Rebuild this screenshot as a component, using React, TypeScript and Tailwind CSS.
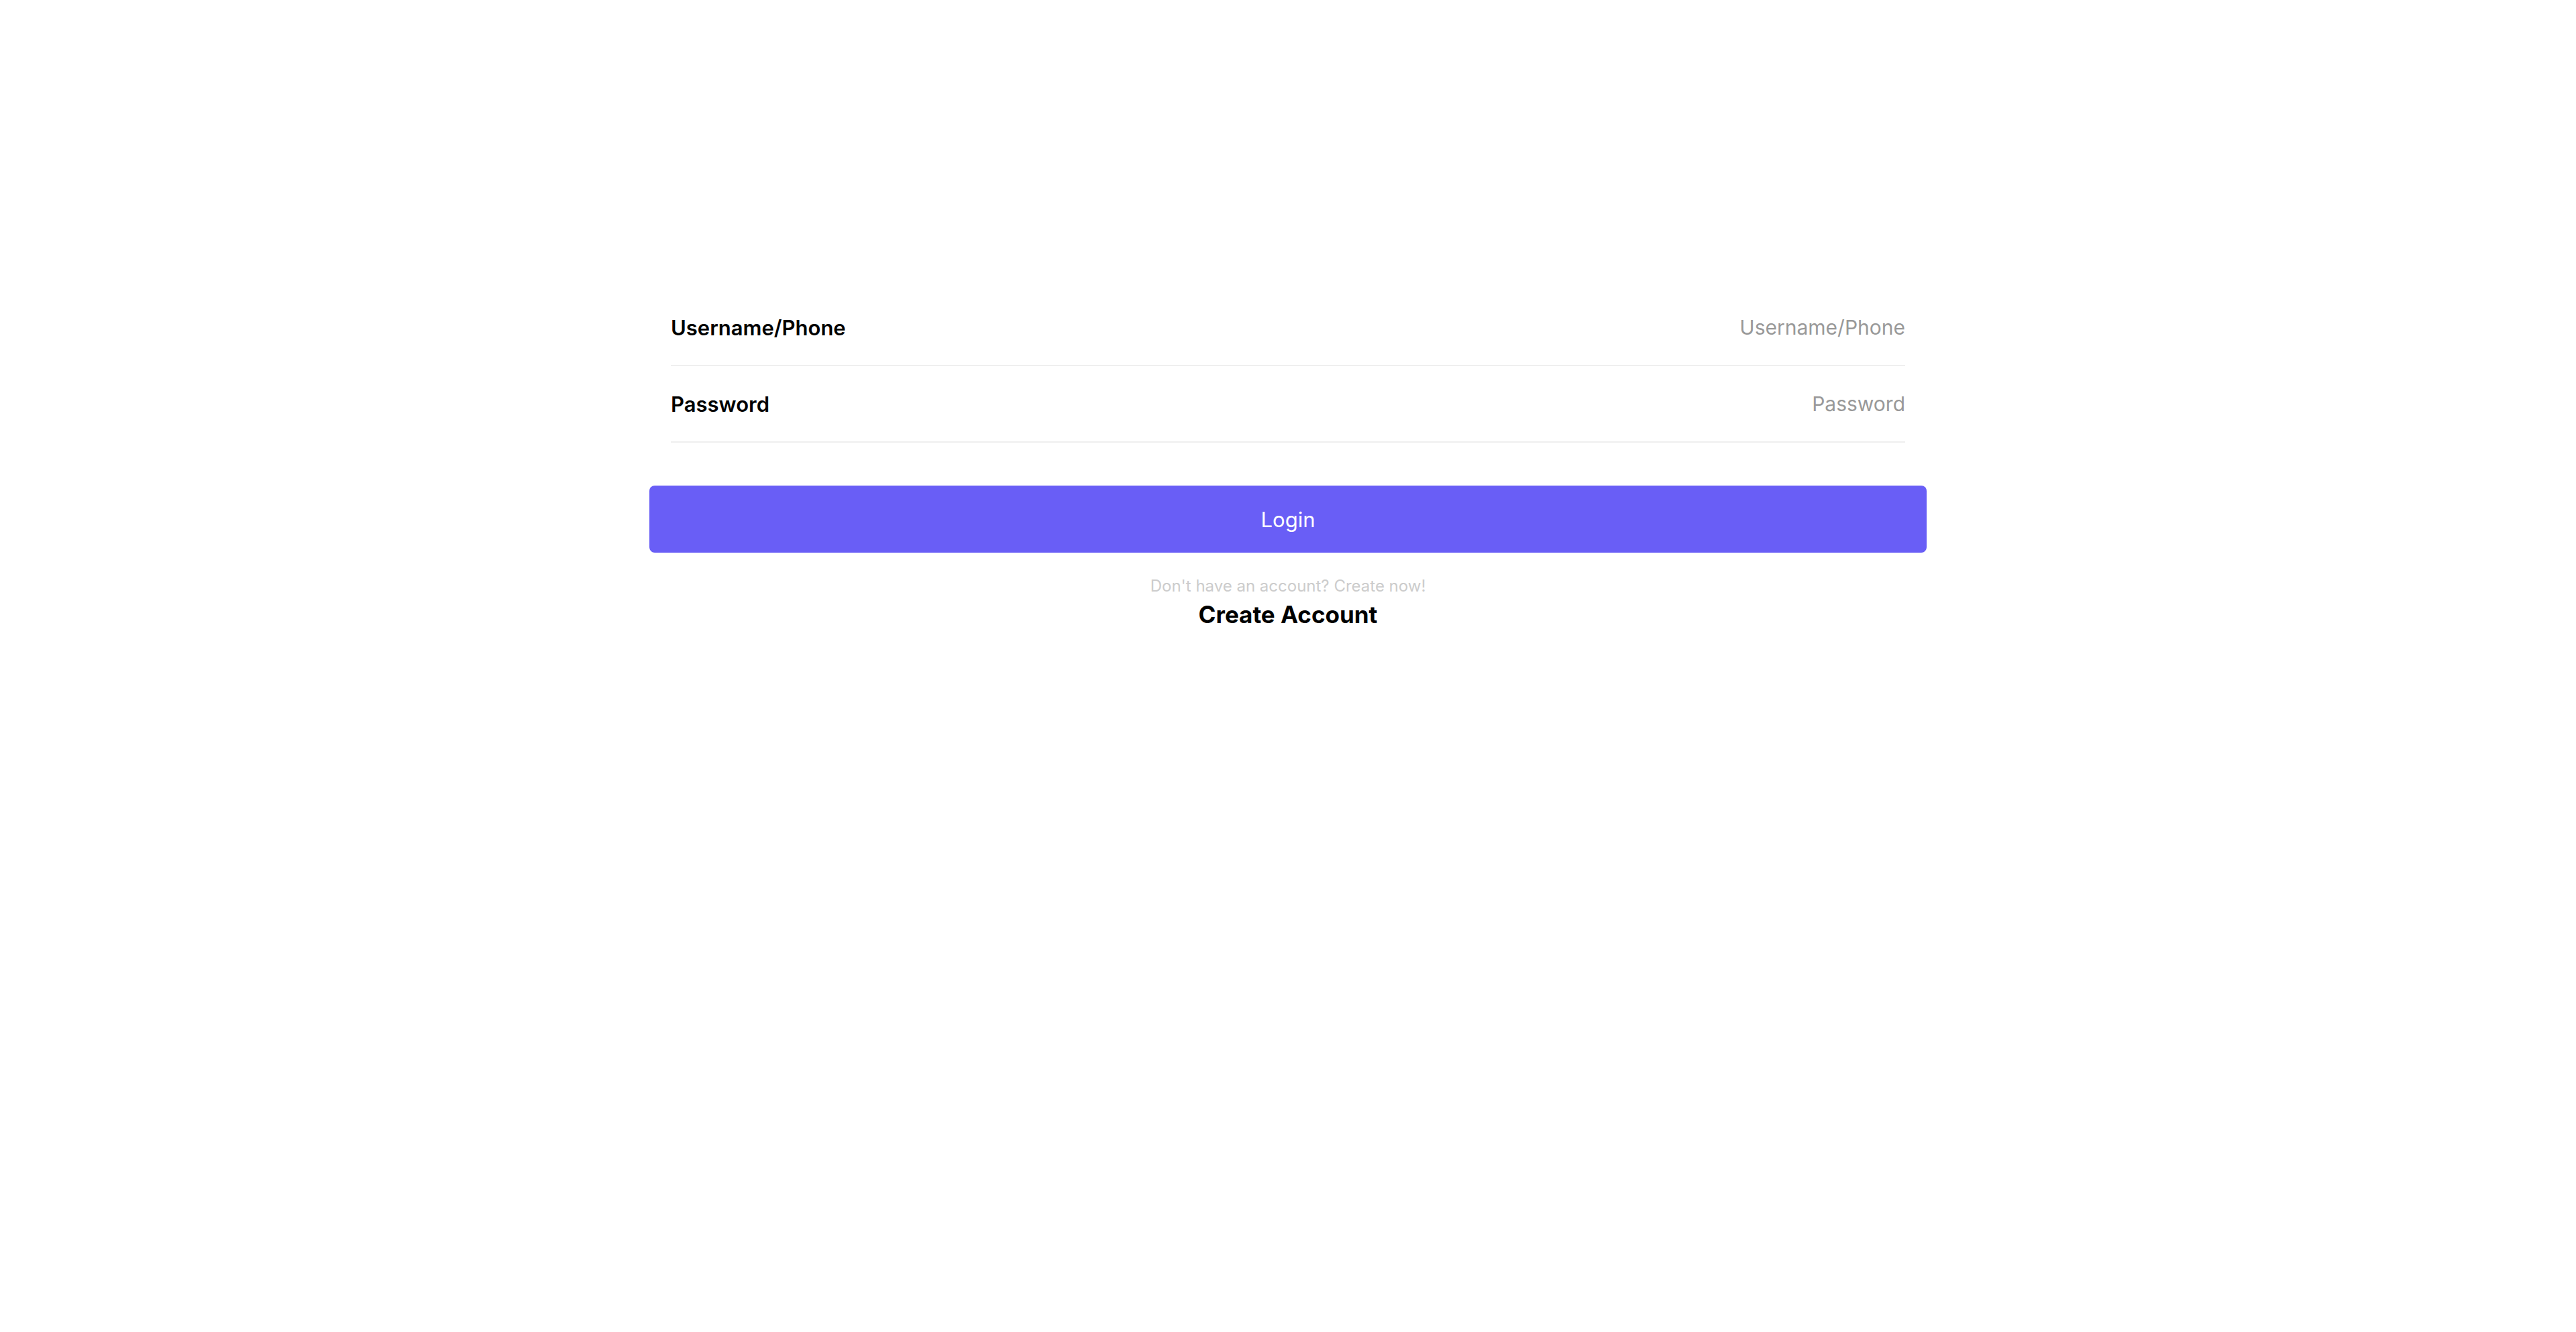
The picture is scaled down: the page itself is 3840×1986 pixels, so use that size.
import React from 'react';

const LoginPage = () => {
  const fields = [
    { label: 'Username/Phone', placeholder: 'Username/Phone', type: 'text' },
    { label: 'Password', placeholder: 'Password', type: 'password' },
  ];

  return (
    <div className="min-h-screen bg-white font-['Inter',sans-serif] text-black">
      <div className="mx-auto w-[1904px] pt-[432px]">
        <div className="px-8">
          {fields.map((field) => (
            <div
              key={field.label}
              className="flex h-[114px] items-center justify-between border-b-2 border-[#efefef]"
            >
              <label className="text-[31px] font-semibold leading-none">{field.label}</label>
              <input
                type={field.type}
                placeholder={field.placeholder}
                className="w-[900px] bg-transparent text-right text-[30px] leading-none outline-none placeholder:text-[#999999]"
              />
            </div>
          ))}
        </div>

        <button className="mt-[64px] flex h-[100px] w-full items-center justify-center rounded-lg bg-[#695ef6] pt-0.5 text-[31px] text-white">
          Login
        </button>

        <div className="mt-[33px] flex flex-col items-center">
          <p className="text-[24px] leading-[34px] text-[#cccccc]">Don't have an account? Create now!</p>
          <a href="#" className="text-[35px] font-bold leading-[50px]">
            Create Account
          </a>
        </div>
      </div>
    </div>
  );
};

export default LoginPage;
